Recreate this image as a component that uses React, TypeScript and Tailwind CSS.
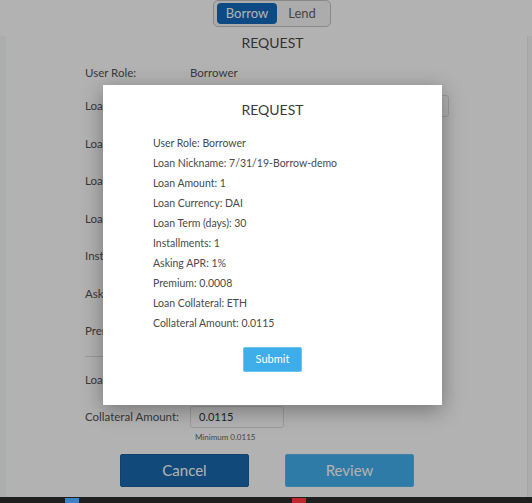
const rows = [
  { label: 'Loan Nickname:', w: 'w-[259px]' },
  { label: 'Loan Amount:', w: 'w-[200px]' },
  { label: 'Loan Currency:', w: 'w-[200px]' },
  { label: 'Loan Term (days):', w: 'w-[200px]' },
  { label: 'Installments:', w: 'w-[200px]' },
  { label: 'Asking APR:', w: 'w-[200px]' },
  { label: 'Premium:', w: 'w-[200px]' },
]

const summary = [
  'User Role: Borrower',
  'Loan Nickname: 7/31/19-Borrow-demo',
  'Loan Amount: 1',
  'Loan Currency: DAI',
  'Loan Term (days): 30',
  'Installments: 1',
  'Asking APR: 1%',
  'Premium: 0.0008',
  'Loan Collateral: ETH',
  'Collateral Amount: 0.0115',
]

function Field({ label, w, value }: { label: string; w: string; value?: string }) {
  return (
    <div className="flex items-center h-[22px]">
      <span className="w-[105px] text-[11.5px] text-[#535353]">{label}</span>
      <div
        className={`h-[22px] ${w} border border-[#dedede] rounded-[3px] bg-white flex items-center px-[8px] text-[11px] text-[#333]`}
      >
        {value}
      </div>
    </div>
  )
}

export default function App() {
  return (
    <div className="relative w-[532px] h-[503px] overflow-hidden bg-white" style={{ fontFamily: 'Lato, "Open Sans", sans-serif' }}>
      {/* page under the overlay */}
      <div className="h-[497px] flex flex-col">
        <div className="h-[36px] flex justify-center shrink-0">
          <div className="ml-[12px] h-[27px] w-[118px] border border-[#c4c4c4] rounded-[5px] p-[3px] flex items-center bg-[#f7f7f7]">
            <div className="h-[21px] w-[60px] rounded-[4px] bg-[#136abe] text-white text-[13px] flex items-center justify-center">
              Borrow
            </div>
            <div className="flex-1 text-center text-[13px] text-[#666]">Lend</div>
          </div>
        </div>
        <div className="flex flex-1">
          <div className="w-[6px] bg-[#f6fafa]" />
          <div className="flex-1 flex flex-col items-center">
            <div className="ml-[12px] text-[14px] leading-[16px] text-[#4a4a4a] -mt-[1px]">REQUEST</div>
            <div className="w-[365px] ml-[2px] mt-[11px] flex flex-col">
              <div className="flex items-center h-[22px]">
                <span className="w-[105px] text-[11.5px] text-[#535353]">User Role:</span>
                <span className="text-[11.5px] text-[#535353]">Borrower</span>
              </div>
              <div className="mt-[11px] flex flex-col gap-[15.5px]">
                {rows.map((r) => (
                  <Field key={r.label} label={r.label} w={r.w} />
                ))}
              </div>
              <div className="mt-[14px] h-px w-[357px] bg-[#dcdcdc]" />
              <div className="mt-[12px] flex flex-col gap-[15px]">
                <Field label="Loan Collateral:" w="w-[200px]" />
                <Field label="Collateral Amount:" w="w-[94px]" value="0.0115" />
              </div>
              <div className="ml-[110px] mt-[3px] text-[8px] text-[#666]">Minimum 0.0115</div>
            </div>
            <div className="mt-[11px] ml-[1px] flex gap-[36px]">
              <button className="w-[129px] h-[33px] bg-[#196aaf] border border-[#1a5f9c] rounded-[2px] text-white text-[15px]">
                Cancel
              </button>
              <button className="w-[129px] h-[33px] bg-[#42b1ef] border border-[#5bb9ee] rounded-[2px] text-white text-[15px]">
                Review
              </button>
            </div>
          </div>
          <div className="w-[5px] bg-[#f7f7f7] border-l border-[#ececec]" />
        </div>
      </div>
      <div className="h-[6px] bg-[#1f1f1f] relative">
        <span className="absolute left-[65px] top-[1px] w-[14px] h-[5px] bg-[#3b82c4]" />
        <span className="absolute left-[292px] top-[1px] w-[14px] h-[5px] bg-[#c0282d]" />
      </div>

      {/* overlay + modal */}
      <div className="absolute left-0 top-0 w-full h-[497px] bg-black/30 flex justify-center pt-[85px] pl-[13px]">
        <div className="w-[339px] h-[320px] bg-white shadow-[0_5px_20px_rgba(0,0,0,0.35)] flex flex-col">
          <div className="pt-[15px] text-center text-[14px] leading-[20px] text-[#3a3a3a]">REQUEST</div>
          <div className="mt-[13px] pl-[50px] flex flex-col">
            {summary.map((s) => (
              <div key={s} className="text-[10.5px] leading-[20px] text-[#4a4a4a]">
                {s}
              </div>
            ))}
          </div>
          <div className="mt-[14px] flex justify-center">
            <button className="w-[59px] h-[25px] bg-[#3daee9] border border-[#6cc3ef] rounded-[2px] text-white text-[11px]">
              Submit
            </button>
          </div>
        </div>
      </div>
    </div>
  )
}
